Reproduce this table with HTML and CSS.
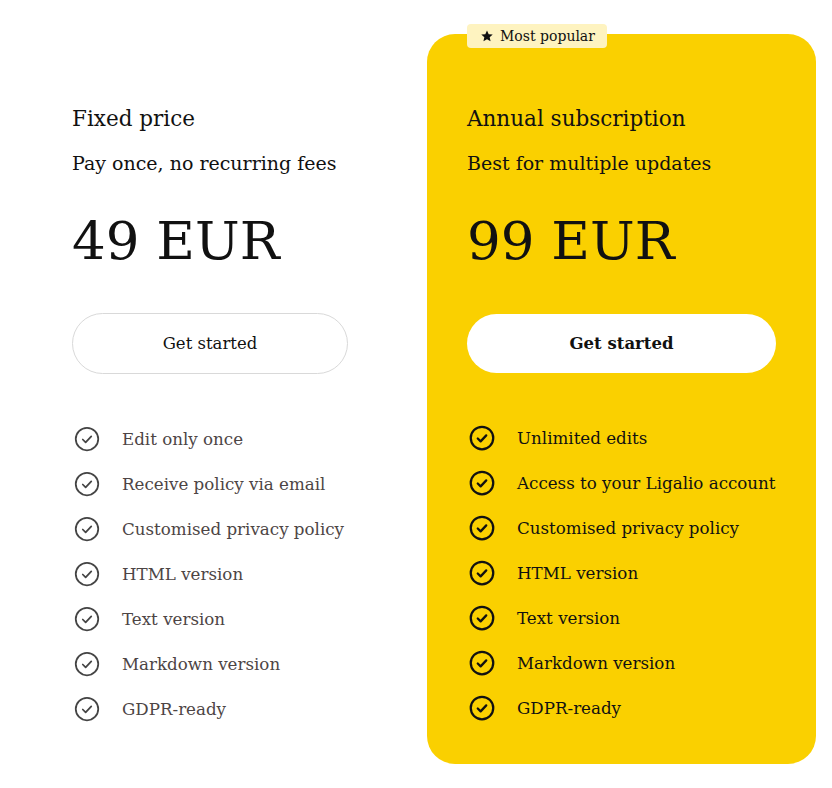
FILE: index.html
```html
<!DOCTYPE html>
<html lang="en">
<head>
<meta charset="utf-8">
<title>Pricing</title>
<link rel="stylesheet" href="styles.css">
</head>
<body>
<div class="page">
  <section class="plan">
    <h2 class="plan-title">Fixed price</h2>
    <p class="plan-sub">Pay once, no recurring fees</p>
    <p class="plan-price">49 EUR</p>
    <a class="btn btn-outline" href="#">Get started</a>
    <ul class="features">
      <li><svg class="check" viewBox="0 0 24 24"><circle cx="12" cy="12" r="9"/><path d="M8.6 12.4l2.3 2.3 4.5-4.8"/></svg><span>Edit only once</span></li>
      <li><svg class="check" viewBox="0 0 24 24"><circle cx="12" cy="12" r="9"/><path d="M8.6 12.4l2.3 2.3 4.5-4.8"/></svg><span>Receive policy via email</span></li>
      <li><svg class="check" viewBox="0 0 24 24"><circle cx="12" cy="12" r="9"/><path d="M8.6 12.4l2.3 2.3 4.5-4.8"/></svg><span>Customised privacy policy</span></li>
      <li><svg class="check" viewBox="0 0 24 24"><circle cx="12" cy="12" r="9"/><path d="M8.6 12.4l2.3 2.3 4.5-4.8"/></svg><span>HTML version</span></li>
      <li><svg class="check" viewBox="0 0 24 24"><circle cx="12" cy="12" r="9"/><path d="M8.6 12.4l2.3 2.3 4.5-4.8"/></svg><span>Text version</span></li>
      <li><svg class="check" viewBox="0 0 24 24"><circle cx="12" cy="12" r="9"/><path d="M8.6 12.4l2.3 2.3 4.5-4.8"/></svg><span>Markdown version</span></li>
      <li><svg class="check" viewBox="0 0 24 24"><circle cx="12" cy="12" r="9"/><path d="M8.6 12.4l2.3 2.3 4.5-4.8"/></svg><span>GDPR-ready</span></li>
    </ul>
  </section>
  <section class="plan plan-featured">
    <span class="badge"><svg class="star" viewBox="0 0 24 24"><path d="M12 2.5l2.9 6.3 6.9.7-5.2 4.6 1.5 6.8L12 17.4l-6.1 3.5 1.5-6.8-5.2-4.6 6.9-.7z"/></svg>Most popular</span>
    <h2 class="plan-title">Annual subscription</h2>
    <p class="plan-sub">Best for multiple updates</p>
    <p class="plan-price">99 EUR</p>
    <a class="btn btn-solid" href="#">Get started</a>
    <ul class="features">
      <li><svg class="check" viewBox="0 0 24 24"><circle cx="12" cy="12" r="9"/><path d="M8.6 12.4l2.3 2.3 4.5-4.8"/></svg><span>Unlimited edits</span></li>
      <li><svg class="check" viewBox="0 0 24 24"><circle cx="12" cy="12" r="9"/><path d="M8.6 12.4l2.3 2.3 4.5-4.8"/></svg><span>Access to your Ligalio account</span></li>
      <li><svg class="check" viewBox="0 0 24 24"><circle cx="12" cy="12" r="9"/><path d="M8.6 12.4l2.3 2.3 4.5-4.8"/></svg><span>Customised privacy policy</span></li>
      <li><svg class="check" viewBox="0 0 24 24"><circle cx="12" cy="12" r="9"/><path d="M8.6 12.4l2.3 2.3 4.5-4.8"/></svg><span>HTML version</span></li>
      <li><svg class="check" viewBox="0 0 24 24"><circle cx="12" cy="12" r="9"/><path d="M8.6 12.4l2.3 2.3 4.5-4.8"/></svg><span>Text version</span></li>
      <li><svg class="check" viewBox="0 0 24 24"><circle cx="12" cy="12" r="9"/><path d="M8.6 12.4l2.3 2.3 4.5-4.8"/></svg><span>Markdown version</span></li>
      <li><svg class="check" viewBox="0 0 24 24"><circle cx="12" cy="12" r="9"/><path d="M8.6 12.4l2.3 2.3 4.5-4.8"/></svg><span>GDPR-ready</span></li>
    </ul>
  </section>
</div>
</body>
</html>
```
FILE: styles.css
```css
* { box-sizing: border-box; }

html, body {
  margin: 0;
  padding: 0;
  background: #ffffff;
}

body {
  font-family: "DejaVu Serif", "Liberation Serif", serif;
  color: #111111;
}

.page {
  display: flex;
  align-items: flex-start;
  gap: 39px;
  padding: 34px 16px 0 32px;
}

.plan {
  position: relative;
  width: 356px;
  padding: 70px 40px 42px;
  display: flex;
  flex-direction: column;
}

.plan-featured {
  width: 389px;
  background: #fad000;
  border-radius: 28px;
}

.badge {
  position: absolute;
  top: -10px;
  left: 40px;
  height: 24px;
  display: flex;
  align-items: center;
  gap: 6px;
  padding: 0 12px 0 13px;
  background: #fef3c0;
  border-radius: 4px;
  font-size: 14px;
  color: #111;
  white-space: nowrap;
}

.star {
  width: 14px;
  height: 14px;
  fill: #111;
}

.plan-title {
  margin: 0;
  font-size: 21.5px;
  line-height: 30px;
  font-weight: normal;
}

.plan-sub {
  margin: 14px 0 0;
  font-size: 19px;
  line-height: 30px;
}

.plan-price {
  margin: 33px 0 0;
  font-size: 53px;
  line-height: 60px;
  font-weight: normal;
}

.btn {
  margin-top: 42px;
  height: 61px;
  display: flex;
  align-items: center;
  justify-content: center;
  border-radius: 31px;
  background: #ffffff;
  color: #111;
  text-decoration: none;
  font-size: 16.5px;
}

.btn-outline {
  border: 1px solid #d9d9d9;
}

.btn-solid {
  font-weight: bold;
  height: 59px;
  margin-top: 43px;
}

.features {
  list-style: none;
  margin: 51px 0 0;
  padding: 0;
  display: flex;
  flex-direction: column;
  gap: 17px;
}

.features li {
  display: flex;
  align-items: center;
  gap: 20px;
  height: 28px;
  font-size: 16.7px;
  color: #4d4545;
}

.plan-featured .features li {
  color: #111;
}

.check {
  width: 30px;
  height: 30px;
  flex: none;
  fill: none;
  stroke: #444;
  stroke-width: 1.4;
  stroke-linecap: round;
  stroke-linejoin: round;
}

.plan-featured .check {
  stroke: #111;
  stroke-width: 1.8;
}
```
